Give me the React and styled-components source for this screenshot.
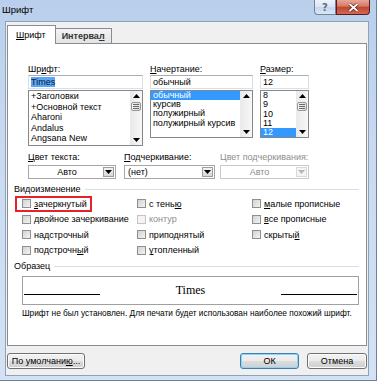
import React from "react";
import styled, { createGlobalStyle } from "styled-components";

const GlobalStyle = createGlobalStyle`
  html, body {
    margin: 0;
    padding: 0;
    background: #fff;
  }
  body {
    font-family: "Liberation Sans", Arial, sans-serif;
    font-size: 9px;
    color: #000;
  }
  * { box-sizing: border-box; }
`;

const Window = styled.div`
  width: 377px;
  height: 381px;
  display: flex;
  flex-direction: column;
  padding: 0 7px 4px 5px;
  background: linear-gradient(180deg, #b9cfeb 0%, #c9daf0 40%, #d4e2f3 100%);
  border-right: 1px solid #6d8099;
  border-bottom: 1px solid #6d8099;
`;

const TitleBar = styled.div`
  height: 21px;
  flex: none;
  margin: 0 -7px 0 -5px;
  display: flex;
  justify-content: space-between;
  align-items: flex-start;
`;

const Title = styled.div`
  padding: 4px 0 0 2px;
  font-size: 9.5px;
  line-height: 12px;
`;

const Controls = styled.div`
  display: flex;
  margin-right: 6px;
`;

const CaptionButton = styled.div`
  width: ${p => p.$w}px;
  height: 15px;
  display: flex;
  align-items: center;
  justify-content: center;
  border: 1px solid ${p => (p.$close ? "#5a1e16" : "#6f839e")};
  border-top: none;
  border-radius: ${p => (p.$close ? "0 0 4px 0" : "0 0 0 4px")};
  background: ${p =>
    p.$close
      ? "linear-gradient(180deg, #e8a598 0%, #d57a68 45%, #c2432f 50%, #cf6a55 100%)"
      : "linear-gradient(180deg, #eef3fa 0%, #d9e5f3 50%, #c4d5eb 50%, #dbe6f5 100%)"};
  color: #5b6f8c;
  font-family: "DejaVu Sans", sans-serif;
  font-size: 10px;
  font-weight: bold;
`;

const Client = styled.div`
  flex: 1;
  display: flex;
  flex-direction: column;
  border: 1px solid #8da2bd;
  background: #f0f0f0;
`;

const TabStrip = styled.div`
  height: 21px;
  flex: none;
  display: flex;
  align-items: flex-end;
  padding-left: 1px;
`;

const Tab = styled.div`
  position: relative;
  z-index: 1;
  height: ${p => (p.$active ? 19 : 15)}px;
  margin-bottom: ${p => (p.$active ? -1 : 0)}px;
  padding: ${p => (p.$active ? "4px 9px 0 8px" : "2px 6px 0 6px")};
  border: 1px solid #898c95;
  border-bottom: none;
  border-left: ${p => (p.$active ? "1px solid #898c95" : "none")};
  background: ${p => (p.$active ? "#fff" : "linear-gradient(180deg, #f3f3f3, #e3e3e3)")};
  line-height: 11px;
  font-weight: ${p => (p.$active ? "normal" : "bold")};
  color: ${p => (p.$active ? "#000" : "#333")};
`;

const TabPage = styled.div`
  height: 303px;
  flex: none;
  margin: 0 1px;
  border: 1px solid #898c95;
  background: #fff;
  display: flex;
  flex-direction: column;
`;

const Upper = styled.div`
  padding: 19px 0 0 20px;
`;

const FieldRow = styled.div`
  display: flex;
  gap: 7px;
  align-items: flex-start;
`;

const Field = styled.div`
  width: ${p => p.$w}px;
  display: flex;
  flex-direction: column;
`;

const Label = styled.div`
  height: 12px;
  line-height: 12px;
  color: ${p => (p.$disabled ? "#8d8d8d" : "#000")};
  white-space: nowrap;
`;

const Input = styled.div`
  height: 14px;
  padding-left: 2px;
  line-height: 12px;
  border: 1px solid #dbdfe6;
  border-top-color: #abadb3;
  background: #fff;
`;

const Selected = styled.span`
  background: #5aa5f5;
  color: #0b1a33;
`;

const List = styled.div`
  height: ${p => p.$h}px;
  margin-top: 1px;
  display: flex;
  border: 1px solid #828790;
  background: #fff;
`;

const Items = styled.div`
  flex: 1;
  display: flex;
  flex-direction: column;
  overflow: hidden;
`;

const Item = styled.div`
  height: ${p => p.$row}px;
  line-height: ${p => p.$row}px;
  padding-left: 2px;
  white-space: nowrap;
  background: ${p => (p.$sel ? "#3399ff" : "transparent")};
  color: ${p => (p.$sel ? "#fff" : "#000")};
`;

const Scroll = styled.div`
  width: 12px;
  flex: none;
  display: flex;
  flex-direction: column;
  align-items: center;
  padding: 3px 0 3px;
  background: linear-gradient(90deg, #e9e9e9, #f7f7f7);
`;

const Thumb = styled.div`
  width: 10px;
  height: 9px;
  margin-top: 4px;
  display: flex;
  align-items: center;
  justify-content: center;
  border: 1px solid #979797;
  border-radius: 2px;
  background: linear-gradient(90deg, #f4f4f4, #dcdcdc);
`;

const Spacer = styled.div`
  flex: 1;
`;

const ColorRow = styled.div`
  display: grid;
  grid-template-columns: 96px 96px 89px;
  margin-top: 5px;
`;

const Combo = styled.div`
  width: ${p => p.$w}px;
  height: 14px;
  margin-top: 2px;
  display: flex;
  border: 1px solid ${p => (p.$disabled ? "#c9c9c9" : "#a7a7a7")};
  background: #fff;
  color: ${p => (p.$disabled ? "#8d8d8d" : "#000")};
`;

const ComboText = styled.div`
  flex: 1;
  line-height: 12px;
  padding-left: 3px;
  text-align: ${p => (p.$center ? "center" : "left")};
`;

const DropButton = styled.div`
  width: 11px;
  margin: 1px;
  display: flex;
  align-items: center;
  justify-content: center;
  border: 1px solid ${p => (p.$disabled ? "#dadada" : "#9d9d9d")};
  background: ${p => (p.$disabled ? "#f4f4f4" : "linear-gradient(180deg, #f2f2f2, #d6d6d6)")};
`;

const Group = styled.div`
  padding: 0 7px 0 6px;
  margin-top: ${p => p.$top}px;
`;

const GroupHeader = styled.div`
  display: flex;
  align-items: center;
  gap: 4px;
  height: 11px;
  line-height: 11px;

  &::after {
    content: "";
    flex: 1;
    height: 1px;
    background: #d5dfe5;
  }
`;

const Checks = styled.div`
  display: grid;
  grid-template-columns: 115px 115px auto;
  grid-auto-rows: 15.5px;
  padding-left: 8px;
  margin-top: 1px;
`;

const Check = styled.label`
  position: relative;
  display: inline-flex;
  align-items: center;
  align-self: center;
  justify-self: start;
  gap: 3px;
  color: ${p => (p.$disabled ? "#8d8d8d" : "#000")};
  white-space: nowrap;

  &::after {
    content: "";
    display: ${p => (p.$marked ? "block" : "none")};
    position: absolute;
    left: -7px;
    right: -5px;
    top: -3px;
    bottom: -3px;
    border: 2px solid #e3222a;
  }
`;

const Box = styled.span`
  width: 9px;
  height: 9px;
  border: 1px solid ${p => (p.$disabled ? "#c4c4c4" : "#8e8f8f")};
  background: ${p => (p.$disabled ? "#f4f4f4" : "linear-gradient(135deg, #d2d2d2, #f3f3f3)")};
`;

const Preview = styled.div`
  height: 29px;
  margin: 4px 0 0 8px;
  padding: 0 1px 9px 1px;
  display: flex;
  align-items: flex-end;
  border: 1px solid #a0a0a0;
`;

const PreviewLine = styled.div`
  width: 76px;
  height: 1px;
  background: #000;
`;

const Sample = styled.div`
  flex: 1;
  text-align: center;
  font-family: "Liberation Serif", "Times New Roman", serif;
  font-size: 12px;
  line-height: 14px;
  margin-bottom: -2px;
`;

const Note = styled.div`
  margin: 3px 0 0 8px;
  font-size: 8.3px;
  line-height: 11px;
  white-space: nowrap;
`;

const Footer = styled.div`
  flex: 1;
  display: flex;
  align-items: flex-start;
  gap: 8px;
  padding: 7px 1px 0 1px;
`;

const Button = styled.div`
  width: ${p => p.$w}px;
  height: 16px;
  margin-left: ${p => (p.$push ? "auto" : "0")};
  display: flex;
  align-items: center;
  justify-content: center;
  border: 1px solid ${p => (p.$default ? "#3c7fb1" : "#707070")};
  border-radius: 3px;
  background: linear-gradient(180deg, #f2f2f2 0%, #ebebeb 50%, #dddddd 50%, #cfcfcf 100%);
  box-shadow: ${p => (p.$default ? "inset 0 0 0 1px #8fd4f8" : "inset 0 0 0 1px #fcfcfc")};
`;

const Arrow = ({ down, color = "#000" }) => (
  <svg width="7" height="4" viewBox="0 0 7 4">
    <path d={down ? "M0 0h7L3.5 4z" : "M0 4h7L3.5 0z"} fill={color} />
  </svg>
);

const Grip = () => (
  <svg width="6" height="5" viewBox="0 0 6 5">
    <path d="M0 0.5h6M0 2.5h6M0 4.5h6" stroke="#6b6b6b" strokeWidth="1" />
  </svg>
);

const ScrollBar = ({ thumb }) => (
  <Scroll>
    <Arrow />
    {thumb && (
      <Thumb>
        <Grip />
      </Thumb>
    )}
    <Spacer />
    <Arrow down />
  </Scroll>
);

const DropDown = ({ w, text, center, disabled }) => (
  <Combo $w={w} $disabled={disabled}>
    <ComboText $center={center}>{text}</ComboText>
    <DropButton $disabled={disabled}>
      <Arrow down color={disabled ? "#b5b5b5" : "#000"} />
    </DropButton>
  </Combo>
);

const fonts = ["+Заголовки", "+Основной текст", "Aharoni", "Andalus", "Angsana New"];
const styles = ["обычный", "курсив", "полужирный", "полужирный курсив"];
const sizes = ["8", "9", "10", "11", "12"];

const effects = [
  [<><u>з</u>ачеркнутый</>, { marked: true }],
  [<>с тень<u>ю</u></>, {}],
  [<><u>м</u>алые прописные</>, {}],
  [<>двойное зачеркивание</>, {}],
  [<>контур</>, { disabled: true }],
  [<><u>в</u>се прописные</>, {}],
  [<>на<u>д</u>строчный</>, {}],
  [<>приподнятый</>, {}],
  [<>скрыты<u>й</u></>, {}],
  [<>подстрочн<u>ы</u>й</>, {}],
  [<><u>у</u>топленный</>, {}],
];

export default function App() {
  return (
    <>
      <GlobalStyle />
      <Window>
        <TitleBar>
          <Title>Шрифт</Title>
          <Controls>
            <CaptionButton $w={22}>?</CaptionButton>
            <CaptionButton $w={34} $close>
              <svg width="11" height="9" viewBox="0 0 11 9">
                <path d="M1.5 1l8 7M9.5 1l-8 7" stroke="#5a1e16" strokeWidth="3.2" />
                <path d="M1.5 1l8 7M9.5 1l-8 7" stroke="#fff" strokeWidth="1.8" />
              </svg>
            </CaptionButton>
          </Controls>
        </TitleBar>
        <Client>
          <TabStrip>
            <Tab $active><u>Ш</u>рифт</Tab>
            <Tab>Интерва<u>л</u></Tab>
          </TabStrip>
          <TabPage>
            <Upper>
              <FieldRow>
                <Field $w={115}>
                  <Label>Шр<u>и</u>фт:</Label>
                  <Input><Selected>Times</Selected></Input>
                  <List $h={56}>
                    <Items>
                      {fonts.map(f => (
                        <Item key={f} $row={10.5}>{f}</Item>
                      ))}
                    </Items>
                    <ScrollBar thumb />
                  </List>
                </Field>
                <Field $w={103}>
                  <Label><u>Н</u>ачертание:</Label>
                  <Input>обычный</Input>
                  <List $h={48}>
                    <Items>
                      {styles.map((s, i) => (
                        <Item key={s} $row={9.2} $sel={i === 0}>{s}</Item>
                      ))}
                    </Items>
                    <ScrollBar />
                  </List>
                </Field>
                <Field $w={49}>
                  <Label><u>Р</u>азмер:</Label>
                  <Input>12</Input>
                  <List $h={48}>
                    <Items>
                      {sizes.map(s => (
                        <Item key={s} $row={9.3} $sel={s === "12"}>{s}</Item>
                      ))}
                    </Items>
                    <ScrollBar thumb />
                  </List>
                </Field>
              </FieldRow>
              <ColorRow>
                <div>
                  <Label><u>Ц</u>вет текста:</Label>
                  <DropDown w={88} text="Авто" center />
                </div>
                <div>
                  <Label><u>П</u>одчеркивание:</Label>
                  <DropDown w={91} text="(нет)" />
                </div>
                <div>
                  <Label $disabled>Цвет подчеркивания:</Label>
                  <DropDown w={89} text="Авто" center disabled />
                </div>
              </ColorRow>
            </Upper>
            <Group $top={5}>
              <GroupHeader>Видоизменение</GroupHeader>
              <Checks>
                {effects.map(([text, o], i) => (
                  <Check key={i} $marked={o.marked} $disabled={o.disabled}>
                    <Box $disabled={o.disabled} />
                    <span>{text}</span>
                  </Check>
                ))}
              </Checks>
            </Group>
            <Group $top={3}>
              <GroupHeader>Образец</GroupHeader>
              <Preview>
                <PreviewLine />
                <Sample>Times</Sample>
                <PreviewLine />
              </Preview>
              <Note>Шрифт не был установлен. Для печати будет использован наиболее похожий шрифт.</Note>
            </Group>
          </TabPage>
          <Footer>
            <Button $w={78}>По умолчани<u>ю</u>...</Button>
            <Button $w={59} $push $default>ОК</Button>
            <Button $w={60}>Отмена</Button>
          </Footer>
        </Client>
      </Window>
    </>
  );
}
